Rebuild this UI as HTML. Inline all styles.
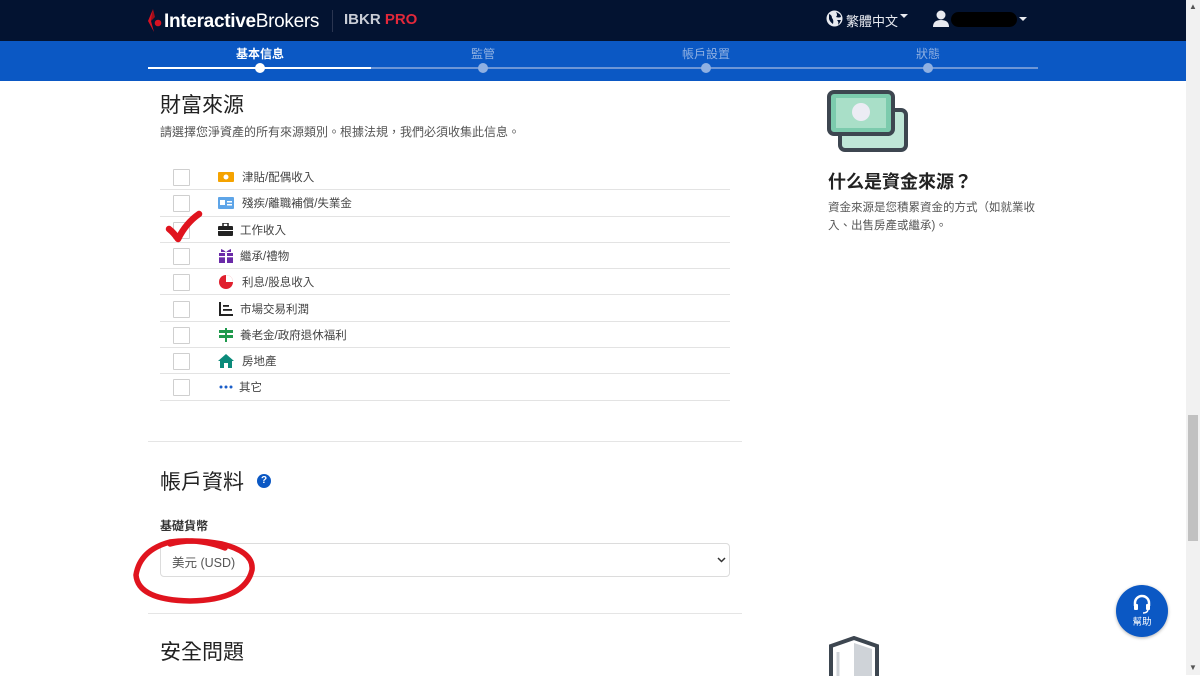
<!DOCTYPE html>
<html><head><meta charset="utf-8"><style>
*{margin:0;padding:0;box-sizing:border-box}
body{width:1200px;height:675px;overflow:hidden;background:#fff;font-family:"Liberation Sans","Noto Sans CJK TC",sans-serif;position:relative;color:#222}
.abs{position:absolute}
.hdr{left:0;top:0;width:1186px;height:41px;background:#031331}
.band{left:0;top:41px;width:1186px;height:40px;background:#0b58c4}
.step{top:45px;font-size:12px;color:#8fb0e2;width:120px;text-align:center}
.dot{top:63px;width:10px;height:10px;border-radius:50%;background:#8fb0e2}
.row{left:160px;width:570px;height:26.3px;border-bottom:1px solid #e3e3e3}
.cb{position:absolute;left:13px;top:5px;width:17px;height:17px;border:1.5px solid #cfcfcf;border-radius:1px}
.lab{position:absolute;left:82px;top:5px;font-size:11.5px;color:#444}
.ic{position:absolute;left:58px;top:6px;width:16px;height:14px}
</style></head><body>
<div class="abs hdr"></div>
<svg class="abs" style="left:146px;top:8px" width="16" height="26" viewBox="0 0 16 26"><path d="M7 1 L2 13 L8 24 L5 13 Z" fill="#d81222"/><path d="M7 1 L9 9 L5 13Z" fill="#a00d18"/><circle cx="12" cy="15" r="3.3" fill="#d81222"/></svg>
<div class="abs" style="left:164px;top:11px;font-size:19px;color:#fff;letter-spacing:-0.3px"><b style="font-weight:700">Interactive</b>Brokers</div>
<div class="abs" style="left:332px;top:10px;width:1px;height:22px;background:#2a3550"></div>
<div class="abs" style="left:344px;top:11px;font-size:15px;font-weight:700;color:#c9cdd6">IBKR <span style="color:#e2283a">PRO</span></div>
<svg class="abs" style="left:826px;top:10px" width="17" height="17" viewBox="0 0 17 17"><circle cx="8.5" cy="8.5" r="8" fill="#e8eaf0"/><path d="M3 4 Q6 5 6 8 Q8 10 7 14 Q4 12 3 9Z M10 2 Q12 5 10 7 Q13 8 15 7 Q15 4 10 2Z M11 10 Q13 12 12 15 Q14 13 15 10Z" fill="#031331"/></svg>
<div class="abs" style="left:846px;top:11px;font-size:13px;color:#e8eaf0">繁體中文</div>
<div class="abs" style="left:900px;top:14px;width:0;height:0;border-left:4px solid transparent;border-right:4px solid transparent;border-top:4px solid #e8eaf0"></div>
<svg class="abs" style="left:933px;top:10px" width="16" height="17"><circle cx="8" cy="5" r="4.5" fill="#e8eaf0"/><path d="M0 17 Q0 10 8 10 Q16 10 16 17Z" fill="#e8eaf0"/></svg>
<div class="abs" style="left:951px;top:12px;width:66px;height:15px;border-radius:8px;background:#000"></div>
<div class="abs" style="left:1019px;top:17px;width:0;height:0;border-left:4px solid transparent;border-right:4px solid transparent;border-top:4px solid #e8eaf0"></div>
<div class="abs band"></div>
<div class="abs" style="left:148px;top:67px;width:890px;height:2px;background:#6d96d6"></div>
<div class="abs" style="left:148px;top:67px;width:223px;height:2px;background:#fff"></div>
<div class="abs step" style="left:200px;color:#fff;font-weight:700">基本信息</div>
<div class="abs step" style="left:423px">監管</div>
<div class="abs step" style="left:646px">帳戶設置</div>
<div class="abs step" style="left:868px">狀態</div>
<div class="abs dot" style="left:255px;background:#fff"></div>
<div class="abs dot" style="left:478px"></div>
<div class="abs dot" style="left:701px"></div>
<div class="abs dot" style="left:923px"></div>

<div class="abs" style="left:160px;top:89px;font-size:21px;color:#222">財富來源</div>
<div class="abs" style="left:160px;top:123px;font-size:12px;color:#555">請選擇您淨資產的所有來源類別。根據法規，我們必須收集此信息。</div>

<div class="abs row" style="top:164px"><div class="cb"></div><svg class="ic" viewBox="0 0 16 14"><rect x="0" y="2" width="16" height="10" rx="1" fill="#f5a300"/><circle cx="8" cy="7" r="2.5" fill="#fff"/></svg><div class="lab">津貼/配偶收入</div></div>
<div class="abs row" style="top:190.3px"><div class="cb"></div><svg class="ic" viewBox="0 0 16 14"><rect x="0" y="1" width="16" height="12" rx="1" fill="#5ea5e8"/><rect x="2" y="4" width="5" height="5" fill="#fff"/><rect x="9" y="5" width="5" height="1.5" fill="#fff"/><rect x="9" y="8" width="5" height="1.5" fill="#fff"/></svg><div class="lab">殘疾/離職補償/失業金</div></div>
<div class="abs row" style="top:216.6px"><div class="cb"></div><svg class="ic" viewBox="0 0 16 14"><rect x="0" y="3" width="15" height="10" rx="1" fill="#222"/><rect x="5" y="0" width="5" height="4" fill="none" stroke="#222" stroke-width="1.5"/><rect x="0" y="7" width="15" height="1" fill="#fff"/></svg><div class="lab" style="left:80px">工作收入</div></div>
<div class="abs row" style="top:242.9px"><div class="cb"></div><svg class="ic" viewBox="0 0 16 14"><rect x="1" y="4" width="14" height="10" fill="#6a2aa8"/><rect x="7" y="1" width="2" height="13" fill="#fff"/><rect x="1" y="7" width="14" height="1.3" fill="#fff"/><path d="M3 0 Q8 2 8 4 Q8 2 13 0 L13 3 L3 3Z" fill="#6a2aa8"/></svg><div class="lab" style="left:80px">繼承/禮物</div></div>
<div class="abs row" style="top:269.2px"><div class="cb"></div><svg class="ic" viewBox="0 0 16 14"><circle cx="8" cy="7" r="7" fill="#e0202e"/><path d="M8 7 L8 0 A7 7 0 0 1 15 7Z" fill="#fff"/></svg><div class="lab">利息/股息收入</div></div>
<div class="abs row" style="top:295.5px"><div class="cb"></div><svg class="ic" viewBox="0 0 16 14"><rect x="1" y="0" width="2" height="14" fill="#222"/><rect x="1" y="12" width="14" height="2" fill="#222"/><rect x="5" y="3" width="6" height="1.8" fill="#222"/><rect x="5" y="7" width="9" height="1.8" fill="#222"/></svg><div class="lab" style="left:80px">市場交易利潤</div></div>
<div class="abs row" style="top:321.8px"><div class="cb"></div><svg class="ic" viewBox="0 0 16 14"><rect x="7" y="0" width="2" height="14" fill="#1f9a4c"/><rect x="1" y="2" width="14" height="3" fill="#1f9a4c"/><rect x="1" y="7" width="14" height="3" fill="#1f9a4c"/></svg><div class="lab" style="left:80px">養老金/政府退休福利</div></div>
<div class="abs row" style="top:348.1px"><div class="cb"></div><svg class="ic" viewBox="0 0 16 14"><path d="M8 0 L16 7 L14 7 L14 14 L10 14 L10 9 L6 9 L6 14 L2 14 L2 7 L0 7Z" fill="#0b8a7a"/></svg><div class="lab">房地產</div></div>
<div class="abs row" style="top:374.4px"><div class="cb"></div><svg class="ic" viewBox="0 0 16 14"><circle cx="3" cy="7" r="1.5" fill="#1a5ec8"/><circle cx="8" cy="7" r="1.5" fill="#1a5ec8"/><circle cx="13" cy="7" r="1.5" fill="#1a5ec8"/></svg><div class="lab" style="left:79px">其它</div></div>

<svg class="abs" style="left:164px;top:208px" width="40" height="36"><path d="M5 21 Q10 25 14 31 Q22 15 35 6" fill="none" stroke="#e0141e" stroke-width="6.5" stroke-linecap="round" stroke-linejoin="round"/></svg>

<div class="abs" style="left:148px;top:441px;width:594px;height:1px;background:#e5e5e5"></div>
<div class="abs" style="left:160px;top:466px;font-size:21px;color:#222">帳戶資料</div>
<div class="abs" style="left:257px;top:474px;width:14px;height:14px;border-radius:50%;background:#0b58c4;color:#fff;font-size:10px;font-weight:700;text-align:center;line-height:14px">?</div>
<div class="abs" style="left:160px;top:517px;font-size:12px;font-weight:700;color:#333">基礎貨幣</div>
<div class="abs" style="left:160px;top:543px;width:570px;height:34px;border:1px solid #dcdcdc;border-radius:4px"></div>
<div class="abs" style="left:172px;top:552px;font-size:12.5px;color:#555">美元 (USD)</div>
<svg class="abs" style="left:717px;top:557px" width="9" height="6"><path d="M1 1 L4.5 4.5 L8 1" fill="none" stroke="#333" stroke-width="1.5"/></svg>
<svg class="abs" style="left:130px;top:530px" width="130" height="78"><path d="M95 18 Q70 8 40 12 Q10 20 6 45 Q8 70 60 71 Q115 70 122 40 Q124 22 92 14 Q60 8 40 14" fill="none" stroke="#e0141e" stroke-width="5.5" stroke-linecap="round"/></svg>
<div class="abs" style="left:148px;top:613px;width:594px;height:1px;background:#e5e5e5"></div>
<div class="abs" style="left:160px;top:636px;font-size:21px;color:#222">安全問題</div>

<svg class="abs" style="left:826px;top:88px" width="84" height="66"><rect x="14" y="22" width="66" height="40" rx="5" fill="#bfe6d7" stroke="#3d4650" stroke-width="4"/><rect x="3" y="4" width="64" height="42" rx="5" fill="#7ccbad" stroke="#3d4650" stroke-width="4"/><rect x="10" y="10" width="50" height="30" fill="#a9dfc8"/><circle cx="35" cy="24" r="9" fill="#ececf4"/></svg>
<div class="abs" style="left:828px;top:168px;font-size:18px;font-weight:700;color:#222">什么是資金來源？</div>
<div class="abs" style="left:828px;top:199px;width:210px;font-size:11.5px;color:#555;line-height:18px">資金來源是您積累資金的方式（如就業收入、出售房產或繼承)。</div>

<svg class="abs" style="left:826px;top:636px" width="56" height="40"><path d="M28 2 L51 10 L51 42 L5 42 L5 10Z" fill="#fff" stroke="#3d4650" stroke-width="4"/><path d="M28 7 L46 13 L46 42 L28 42Z" fill="#cfd3d8"/><path d="M12 16 L12 40" stroke="#cfd3d8" stroke-width="3"/></svg>

<div class="abs" style="left:1116px;top:585px;width:52px;height:52px;border-radius:50%;background:#0b58c4;box-shadow:0 1px 3px rgba(0,0,0,.3)"></div>
<svg class="abs" style="left:1132px;top:594px" width="20" height="20"><path d="M3 12 V9 A7 7 0 0 1 17 9 V12" fill="none" stroke="#fff" stroke-width="2.5"/><rect x="2" y="10" width="4" height="6" rx="1" fill="#fff"/><rect x="14" y="10" width="4" height="6" rx="1" fill="#fff"/><path d="M16 16 Q15 19 11 19" stroke="#fff" stroke-width="1.5" fill="none"/></svg>
<div class="abs" style="left:1116px;top:614px;width:52px;text-align:center;font-size:9.5px;color:#fff">幫助</div>

<div class="abs" style="left:1186px;top:0;width:14px;height:675px;background:#f1f1f1"></div>
<div class="abs" style="left:1188px;top:415px;width:10px;height:126px;background:#c1c1c1"></div>
<div class="abs" style="left:1189px;top:2px;font-size:8px;color:#555">▲</div>
<div class="abs" style="left:1189px;top:663px;font-size:8px;color:#555">▼</div>
</body></html>
